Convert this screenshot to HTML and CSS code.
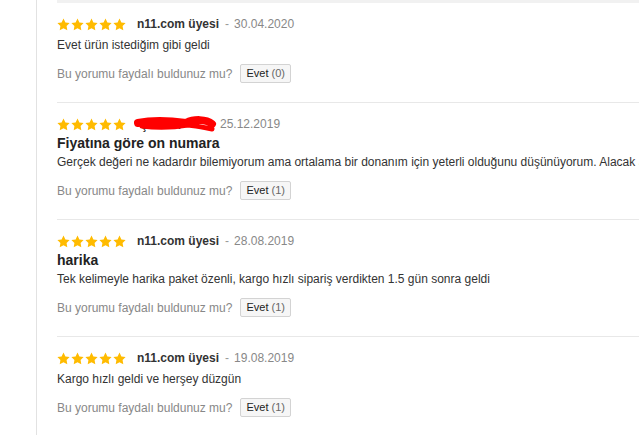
FILE: index.html
```html
<!DOCTYPE html>
<html lang="tr">
<head>
<meta charset="utf-8">
<title>Yorumlar</title>
<link rel="stylesheet" href="styles.css">
</head>
<body>
<svg width="0" height="0" class="defs" aria-hidden="true">
  <defs>
    <symbol id="star" viewBox="0 0 24 24">
      <path d="M12 1l3.5 7.1 7.8 1.1-5.6 5.5 1.3 7.8L12 18.8l-7 3.7 1.3-7.8L.7 9.2l7.8-1.1z"/>
    </symbol>
  </defs>
</svg>
<div class="page">
  <div class="col">
    <div class="list">
      <div class="review">
        <div class="head">
          <span class="stars"><svg><use href="#star"/></svg><svg><use href="#star"/></svg><svg><use href="#star"/></svg><svg><use href="#star"/></svg><svg><use href="#star"/></svg></span>
          <span class="name">n11.com üyesi</span><span class="dash">-</span><span class="date">30.04.2020</span>
        </div>
        <p class="text">Evet ürün istediğim gibi geldi</p>
        <div class="helpful">
          <span class="q">Bu yorumu faydalı buldunuz mu?</span>
          <button class="btn"><span class="yes">Evet</span> <span class="cnt">(0)</span></button>
        </div>
      </div>
      <div class="review">
        <div class="head">
          <span class="stars"><svg><use href="#star"/></svg><svg><use href="#star"/></svg><svg><use href="#star"/></svg><svg><use href="#star"/></svg><svg><use href="#star"/></svg></span>
          <span class="masked"><span class="name">ş&nbsp;&nbsp;&nbsp;&nbsp;&nbsp;&nbsp;&nbsp;&nbsp;&nbsp;.</span>
            <svg class="scribble" viewBox="0 0 86 18"><path d="M6 8 C 20 5, 40 6, 54 8 C 62 4, 74 4, 80 9" /><path class="thin" d="M10 11 C 26 13, 44 12, 56 10 C 66 11, 74 13, 80 14"/></svg>
          </span><span class="date">25.12.2019</span>
        </div>
        <h3 class="title">Fiyatına göre on numara</h3>
        <p class="text">Gerçek değeri ne kadardır bilemiyorum ama ortalama bir donanım için yeterli olduğunu düşünüyorum. Alacak arkadaşlara tavsiye ederim.</p>
        <div class="helpful">
          <span class="q">Bu yorumu faydalı buldunuz mu?</span>
          <button class="btn"><span class="yes">Evet</span> <span class="cnt">(1)</span></button>
        </div>
      </div>
      <div class="review">
        <div class="head">
          <span class="stars"><svg><use href="#star"/></svg><svg><use href="#star"/></svg><svg><use href="#star"/></svg><svg><use href="#star"/></svg><svg><use href="#star"/></svg></span>
          <span class="name">n11.com üyesi</span><span class="dash">-</span><span class="date">28.08.2019</span>
        </div>
        <h3 class="title">harika</h3>
        <p class="text">Tek kelimeyle harika paket özenli, kargo hızlı sipariş verdikten 1.5 gün sonra geldi</p>
        <div class="helpful">
          <span class="q">Bu yorumu faydalı buldunuz mu?</span>
          <button class="btn"><span class="yes">Evet</span> <span class="cnt">(1)</span></button>
        </div>
      </div>
      <div class="review">
        <div class="head">
          <span class="stars"><svg><use href="#star"/></svg><svg><use href="#star"/></svg><svg><use href="#star"/></svg><svg><use href="#star"/></svg><svg><use href="#star"/></svg></span>
          <span class="name">n11.com üyesi</span><span class="dash">-</span><span class="date">19.08.2019</span>
        </div>
        <p class="text">Kargo hızlı geldi ve herşey düzgün</p>
        <div class="helpful">
          <span class="q">Bu yorumu faydalı buldunuz mu?</span>
          <button class="btn"><span class="yes">Evet</span> <span class="cnt">(1)</span></button>
        </div>
      </div>
    </div>
  </div>
</div>
</body>
</html>
```
FILE: styles.css
```css
html, body {
  margin: 0;
  padding: 0;
  background: #fff;
  overflow: hidden;
}
body {
  font-family: "Liberation Sans", Arial, sans-serif;
  font-size: 12px;
  color: #333;
}
.defs {
  position: absolute;
  width: 0;
  height: 0;
}
.page {
  padding-left: 36px;
  min-height: 100vh;
}
.col {
  border-left: 1px solid #e2e2e2;
  padding-left: 20px;
  min-height: 100vh;
  overflow: hidden;
}
.list {
  border-top: 3px solid #f1f1f1;
  width: 900px;
}
.review {
  padding: 13px 0 19px;
  border-bottom: 1px solid #e8e8e8;
}
.head {
  display: flex;
  align-items: center;
  height: 16px;
  line-height: 16px;
}
.stars {
  display: flex;
  gap: 1px;
  margin-right: 11px;
}
.stars svg {
  width: 13px;
  height: 13px;
  fill: #ffbb00;
}
.name {
  font-weight: bold;
  color: #333;
}
.dash {
  color: #999;
  margin: 0 5px 0 6px;
}
.date {
  color: #888;
}
.masked {
  position: relative;
  display: inline-block;
  width: 79px;
  margin-right: 4px;
  height: 16px;
}
.masked .name {
  position: relative;
  top: 1px;
  left: 4px;
}
.scribble {
  position: absolute;
  left: -5px;
  top: -1px;
  width: 86px;
  height: 18px;
  fill: none;
  stroke: #ff0000;
  stroke-width: 8;
  stroke-linecap: round;
}
.scribble .thin {
  stroke-width: 5;
}
.title {
  margin: 2px 0 0;
  font-size: 14px;
  line-height: 19px;
  font-weight: bold;
  color: #222;
}
.text {
  margin: 4px 0 0;
  line-height: 18px;
  white-space: nowrap;
  color: #333;
}
.title + .text {
  margin-top: 0;
}
.helpful {
  display: flex;
  align-items: center;
  margin-top: 10px;
}
.q {
  color: #888;
}
.btn {
  margin-left: 8px;
  height: 19px;
  box-sizing: border-box;
  padding: 0 5px;
  border: 1px solid #d3d3d3;
  border-radius: 2px;
  background: #f6f6f6;
  font-family: "Liberation Sans", Arial, sans-serif;
  font-size: 11px;
  line-height: 17px;
  cursor: pointer;
}
.yes {
  color: #222;
}
.cnt {
  color: #666;
}
```
